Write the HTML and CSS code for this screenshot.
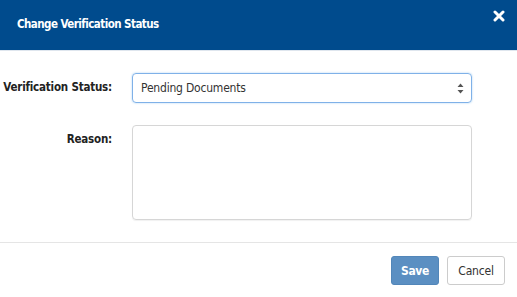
FILE: index.html
```html
<!DOCTYPE html>
<html>
<head>
<meta charset="utf-8">
<link rel="stylesheet" href="styles.css">
</head>
<body>
<div class="modal">
  <div class="modal-header">
    <h4 class="modal-title">Change Verification Status</h4>
    <button class="close" aria-label="Close">
      <svg width="12" height="12" viewBox="0 0 12 12"><path d="M2 2 L10 10 M10 2 L2 10" stroke="#fff" stroke-width="3" stroke-linecap="round"/></svg>
    </button>
  </div>
  <div class="modal-body">
    <div class="form-row">
      <label class="form-label">Verification Status:</label>
      <div class="select-wrap">
        <div class="form-select">Pending Documents</div>
        <svg class="arrows" width="7" height="11" viewBox="0 0 7 11"><path d="M3.5 0.5 L6.5 4 L0.5 4 Z M3.5 10.5 L6.5 7 L0.5 7 Z" fill="#555"/></svg>
      </div>
    </div>
    <div class="form-row">
      <label class="form-label">Reason:</label>
      <div class="form-textarea"></div>
    </div>
  </div>
  <div class="modal-footer">
    <button class="btn btn-primary">Save</button>
    <button class="btn btn-default">Cancel</button>
  </div>
</div>
</body>
</html>
```
FILE: styles.css
```css
* { box-sizing: border-box; }
html, body { margin: 0; padding: 0; background: #fff; }
body {
  font-family: "DejaVu Sans Condensed", "DejaVu Sans", sans-serif;
  width: 517px;
  height: 297px;
  overflow: hidden;
}
.modal { width: 517px; }
.modal-header {
  height: 51px;
  background: #004b8d;
  border-bottom: 1px solid #dfe6ee;
  display: flex;
  align-items: center;
  justify-content: space-between;
  padding: 0 12px 2px 17px;
}
.modal-title {
  margin: 0;
  color: #fff;
  font-size: 11.5px;
  letter-spacing: -0.55px;
  font-weight: bold;
}
.close {
  background: none;
  border: 0;
  padding: 0;
  margin-top: -16px;
  width: 12px;
  height: 12px;
  display: flex;
}
.modal-body {
  padding: 22px 45px 22px 0;
  display: flex;
  flex-direction: column;
  gap: 22px;
}
.form-row {
  display: flex;
  align-items: flex-start;
  gap: 20px;
}
.form-label {
  flex: none;
  width: 112px;
  white-space: nowrap;
  text-align: right;
  font-size: 11.5px;
  letter-spacing: -0.2px;
  font-weight: bold;
  color: #222;
  padding-top: 7px;
}
.select-wrap {
  position: relative;
  width: 340px;
}
.form-select {
  height: 30px;
  border: 1px solid #7fb1e8;
  border-radius: 4px;
  box-shadow: 0 0 2px rgba(102,175,233,0.6);
  padding: 0 8px;
  font-size: 12px;
  letter-spacing: -0.2px;
  line-height: 28px;
  color: #333;
}
.arrows {
  position: absolute;
  right: 8px;
  top: 10px;
}
.form-textarea {
  width: 340px;
  height: 95px;
  border: 1px solid #d6d6d6;
  border-radius: 4px;
  box-shadow: 0 1px 1px rgba(0,0,0,0.06);
}
.modal-footer {
  border-top: 1px solid #e5e5e5;
  display: flex;
  justify-content: flex-end;
  gap: 8px;
  padding: 13px 12px 0 0;
}
.btn {
  height: 29px;
  border-radius: 3px;
  font-family: inherit;
  font-size: 12px;
  padding: 0;
}
.btn-primary {
  width: 48px;
  background: #5b8fc2;
  border: 1px solid #5286b9;
  color: #fff;
  font-weight: bold;
  letter-spacing: -0.4px;
}
.btn-default {
  width: 58px;
  background: #fff;
  border: 1px solid #ccc;
  color: #333;
  letter-spacing: -0.2px;
}
```
